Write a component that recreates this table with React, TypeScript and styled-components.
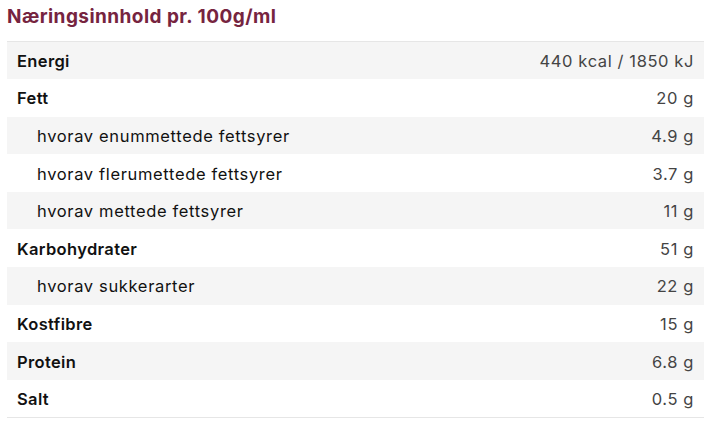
import React from 'react';
import styled, { createGlobalStyle } from 'styled-components';

const GlobalStyle = createGlobalStyle`
    body {
        margin: 0;
        background: #fff;
        font-family: Inter, 'Noto Sans', sans-serif;
    }
`;

const Wrapper = styled.section`
    padding: 4px 1px 0 7px;
`;

const Title = styled.h2`
    margin: 0 0 12px;
    font-size: 19px;
    line-height: 25px;
    font-weight: 700;
    letter-spacing: 0.45px;
    color: #76243f;
`;

const Table = styled.table`
    width: 100%;
    border-collapse: collapse;
    border-top: 1px solid #e6e6e6;
    border-bottom: 1px solid #e6e6e6;
    font-size: 16.5px;
`;

const Row = styled.tr`
    height: 37.6px;
    &:nth-child(odd) {
        background: #f5f5f5;
    }
`;

const Label = styled.td<{ $sub?: boolean }>`
    padding: 1px 0 0 ${p => (p.$sub ? 30 : 10)}px;
    color: #111;
    font-weight: ${p => (p.$sub ? 400 : 600)};
    letter-spacing: ${p => (p.$sub ? 0.65 : 0.35)}px;
`;

const Value = styled.td`
    padding: 1px 10px 0 0;
    text-align: right;
    color: #444;
    letter-spacing: 0.6px;
`;

const rows = [
    { label: 'Energi', value: '440 kcal / 1850 kJ' },
    { label: 'Fett', value: '20 g' },
    { label: 'hvorav enummettede fettsyrer', value: '4.9 g', sub: true },
    { label: 'hvorav flerumettede fettsyrer', value: '3.7 g', sub: true },
    { label: 'hvorav mettede fettsyrer', value: '11 g', sub: true },
    { label: 'Karbohydrater', value: '51 g' },
    { label: 'hvorav sukkerarter', value: '22 g', sub: true },
    { label: 'Kostfibre', value: '15 g' },
    { label: 'Protein', value: '6.8 g' },
    { label: 'Salt', value: '0.5 g' },
];

export default function App() {
    return (
        <Wrapper>
            <GlobalStyle />
            <Title>Næringsinnhold pr. 100g/ml</Title>
            <Table>
                <tbody>
                    {rows.map(row => (
                        <Row key={row.label}>
                            <Label $sub={row.sub}>{row.label}</Label>
                            <Value>{row.value}</Value>
                        </Row>
                    ))}
                </tbody>
            </Table>
        </Wrapper>
    );
}
